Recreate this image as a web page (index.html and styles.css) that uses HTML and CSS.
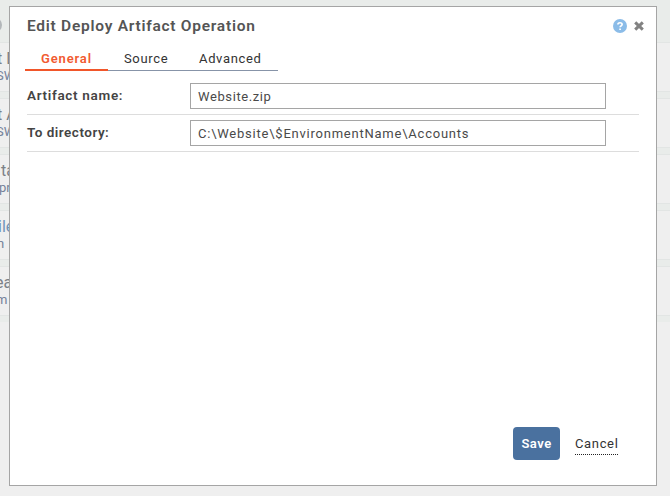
FILE: index.html
```html
<!DOCTYPE html>
<html lang="en">
<head>
<meta charset="utf-8">
<title>Edit Deploy Artifact Operation</title>
<link rel="stylesheet" href="styles.css">
</head>
<body>
<main class="page">
  <header class="page-head"><span class="knob"></span></header>
  <div class="op"><b class="o1">t D</b><i>SW</i></div>
  <div class="op"><b class="o1">t A</b><i>SW</i></div>
  <div class="op"><b class="o3">ta</b><i class="s3">pr</i></div>
  <div class="op"><b class="o4">ile</b><i class="s4">n</i></div>
  <div class="op"><b class="o5">ea</b><i class="s5">m</i></div>
</main>
<section class="dialog">
  <header class="head">
    <h1>Edit Deploy Artifact Operation</h1>
    <svg class="help" width="14" height="14" viewBox="0 0 14 14"><circle cx="7" cy="7" r="7" fill="#8bbce8"/><path d="M4.9 5.6C4.9 3.2 9.1 3.2 9.1 5.4C9.1 6.8 7.2 6.8 7.1 8.3M7.1 9.4V11" fill="none" stroke="#fff" stroke-width="1.7"/></svg>
    <svg class="close" width="10" height="10" viewBox="0 0 10 10"><path d="M1.2 1.4L8.8 8.6M8.8 1.4L1.2 8.6" stroke="#828282" stroke-width="3"/></svg>
  </header>
  <nav class="tabs"><a class="tab on">General</a><a class="tab two">Source</a><a class="tab three">Advanced</a></nav>
  <div class="row"><label>Artifact name:</label><div class="field f1">Website.zip</div></div>
  <div class="row"><label class="l2">To directory:</label><div class="field f2">C:\Website\$EnvironmentName\Accounts</div></div>
  <footer class="actions"><button class="save">Save</button><a class="cancel">Cancel</a></footer>
</section>
</body>
</html>
```
FILE: styles.css
```css
* { box-sizing: border-box; }
body { margin: 0; width: 670px; height: 496px; overflow: hidden; background: #efefef; font: 13px/16px Roboto, "Liberation Sans", sans-serif; color: #444; }
.page { height: 322px; background: #e9ecea; overflow: hidden; }
.page-head { height: 42px; padding-top: 17px; }
.knob { display: block; width: 16px; height: 16px; margin-left: -14px; border-radius: 50%; background: #b3b7ba; }
.op { height: 50px; margin-bottom: 6px; padding-top: 7px; background: #efefef; border: solid #e2e5e4; border-width: 1px 0; white-space: nowrap; }
.op b, .op i { display: block; font-weight: 400; font-style: normal; color: #7b8187; }
.op b { font-size: 16px; line-height: 18px; }
.op i { font-size: 13px; line-height: 16px; margin-left: -4px; color: #75829a; }
.op .o1 { margin-left: -3px; }
.op .o3 { margin-left: 1px; }
.op .o4 { margin-left: -2px; color: #6f93b8; }
.op .o5 { margin-left: -5px; }
.op .s3 { margin-left: -1px; }
.op .s4 { margin-left: -3px; }
.op .s5 { margin-left: -4px; }
.dialog { position: absolute; left: 9px; top: 6px; width: 648px; height: 480px; background: #fff; border: 1px solid #a5a5a5; display: flex; flex-direction: column; padding: 0 17px; }
.head { display: flex; align-items: center; height: 37px; }
h1 { margin: 0; flex: 1; font-size: 15.5px; line-height: 20px; font-weight: 600; color: #555; letter-spacing: .74px; white-space: nowrap; }
.close { margin: 0 -5px 0 7px; }
.tabs { display: flex; height: 27px; width: 253px; margin-left: -2px; color: #333; }
.tab { padding: 7px 0 0 16px; border-bottom: 1px solid #8794a8; }
.on { width: 83px; color: #f15a31; font-weight: 600; border-bottom: 2px solid #f1562a; letter-spacing: .85px; }
.two { width: 75px; letter-spacing: .65px; }
.three { width: 95px; letter-spacing: .65px; }
.row { display: flex; height: 37px; border-bottom: 1px solid #ddd; padding-top: 5px; width: 612px; }
.tabs + .row { height: 44px; padding-top: 12px; }
label { width: 163px; padding-top: 4px; font-size: 13.5px; line-height: 16px; font-weight: 600; color: #444; letter-spacing: .68px; }
.l2 { letter-spacing: .5px; }
.field { width: 416px; height: 26px; border: 1px solid #a5a5a5; padding: 5px 7px; line-height: 16px; color: #4a4a4a; white-space: nowrap; }
.f1 { letter-spacing: .6px; }
.f2 { letter-spacing: .77px; }
.actions { display: flex; align-items: flex-start; justify-content: flex-end; margin: auto 21px 25px 0; }
.save { width: 47px; height: 33px; padding: 0; border: 0; border-radius: 4px; background: #4a719f; color: #fff; font: 600 13px/16px Roboto, "Liberation Sans", sans-serif; letter-spacing: .5px; }
.cancel { width: 43px; height: 28px; margin-left: 15px; padding-top: 9px; border-bottom: 1px dotted #222; color: #333; letter-spacing: .65px; white-space: nowrap; }
```
